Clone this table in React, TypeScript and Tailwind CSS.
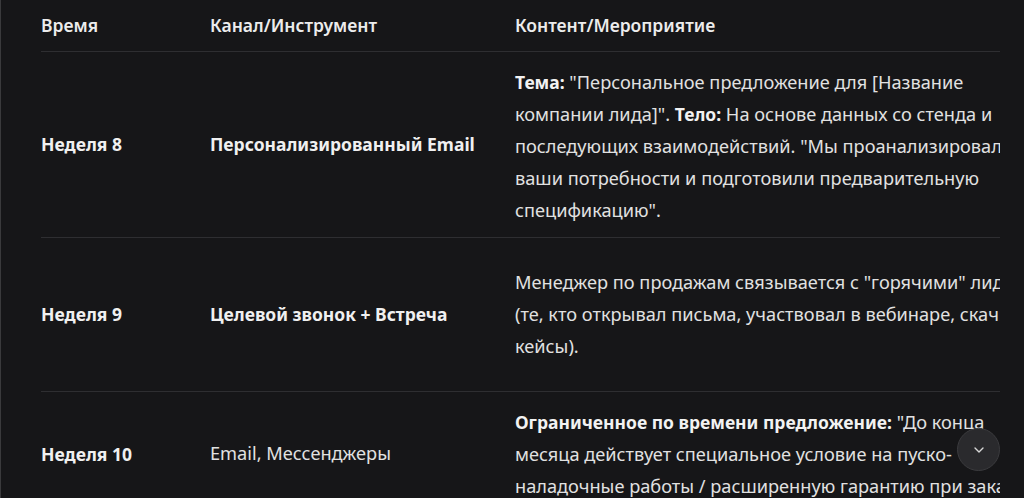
import { ChevronDown } from "lucide-react";

type Row = {
  time: string;
  channel: string;
  channelBold: boolean;
  height: string;
  content: React.ReactNode;
};

const label = "font-bold text-[#f2f2f2] text-[17.5px]";

const rows: Row[] = [
  {
    time: "Неделя 8",
    channel: "Персонализированный Email",
    channelBold: true,
    height: "h-[186px]",
    content: (
      <>
        <strong className={label}>Тема:</strong> "Персональное предложение для [Название
        <br />
        компании лида]". <strong className={label}>Тело:</strong> На основе данных со стенда и
        <br />
        последующих взаимодействий. "Мы проанализировали
        <br />
        ваши потребности и подготовили предварительную
        <br />
        спецификацию".
      </>
    ),
  },
  {
    time: "Неделя 9",
    channel: "Целевой звонок + Встреча",
    channelBold: true,
    height: "h-[154px]",
    content: (
      <>
        Менеджер по продажам связывается с "горячими" лидами
        <br />
        (те, кто открывал письма, участвовал в вебинаре, скачивал
        <br />
        кейсы).
      </>
    ),
  },
  {
    time: "Неделя 10",
    channel: "Email, Мессенджеры",
    channelBold: false,
    height: "h-[126px]",
    content: (
      <>
        <strong className={label}>Ограниченное по времени предложение:</strong> "До конца
        <br />
        месяца действует специальное условие на пуско-
        <br />
        наладочные работы / расширенную гарантию при заказе
      </>
    ),
  },
];

export default function App() {
  return (
    <div
      className="relative h-[498px] w-[1024px] overflow-hidden bg-[#161618] border-l border-[#3a3a3c] text-[#e1e1e1]"
      style={{ fontFamily: '"Noto Sans", "Open Sans", sans-serif' }}
    >
      <div className="ml-[40px] w-[959px] overflow-hidden">
        <table className="w-[1300px] table-fixed border-collapse text-[17.5px]">
          <colgroup>
            <col className="w-[169px]" />
            <col className="w-[305px]" />
            <col className="w-[620px]" />
            <col />
          </colgroup>
          <thead>
            <tr className="h-[51px] border-b border-[#2e2e31]">
              <th className="text-left align-middle font-semibold text-[#ececec]">Время</th>
              <th className="text-left align-middle font-semibold text-[#ececec]">Канал/Инструмент</th>
              <th className="text-left align-middle font-semibold text-[#ececec]">Контент/Мероприятие</th>
              <th className="text-left align-middle"></th>
            </tr>
          </thead>
          <tbody>
            {rows.map((r, i) => (
              <tr key={r.time} className={`${r.height} border-b border-[#2e2e31]`}>
                <td className="align-middle font-bold text-[#f0f0f0]">{r.time}</td>
                <td
                  className={
                    r.channelBold
                      ? "align-middle font-bold text-[#f0f0f0]"
                      : "align-middle text-[18.2px] text-[#e1e1e1]"
                  }
                >
                  {r.channel}
                </td>
                <td
                  className={`align-middle whitespace-nowrap text-[18.2px] leading-[32px] ${i === 0 ? "pt-[3px]" : ""}`}
                >
                  {r.content}
                </td>
                <td className="align-middle"></td>
              </tr>
            ))}
          </tbody>
        </table>
      </div>

      <button className="absolute left-[956px] top-[428px] flex h-[43px] w-[43px] items-center justify-center rounded-full border border-[#3b3b3e] bg-[#2a2a2d] text-[#d8d8d8]">
        <ChevronDown className="h-4 w-4" strokeWidth={2} />
      </button>
    </div>
  );
}
